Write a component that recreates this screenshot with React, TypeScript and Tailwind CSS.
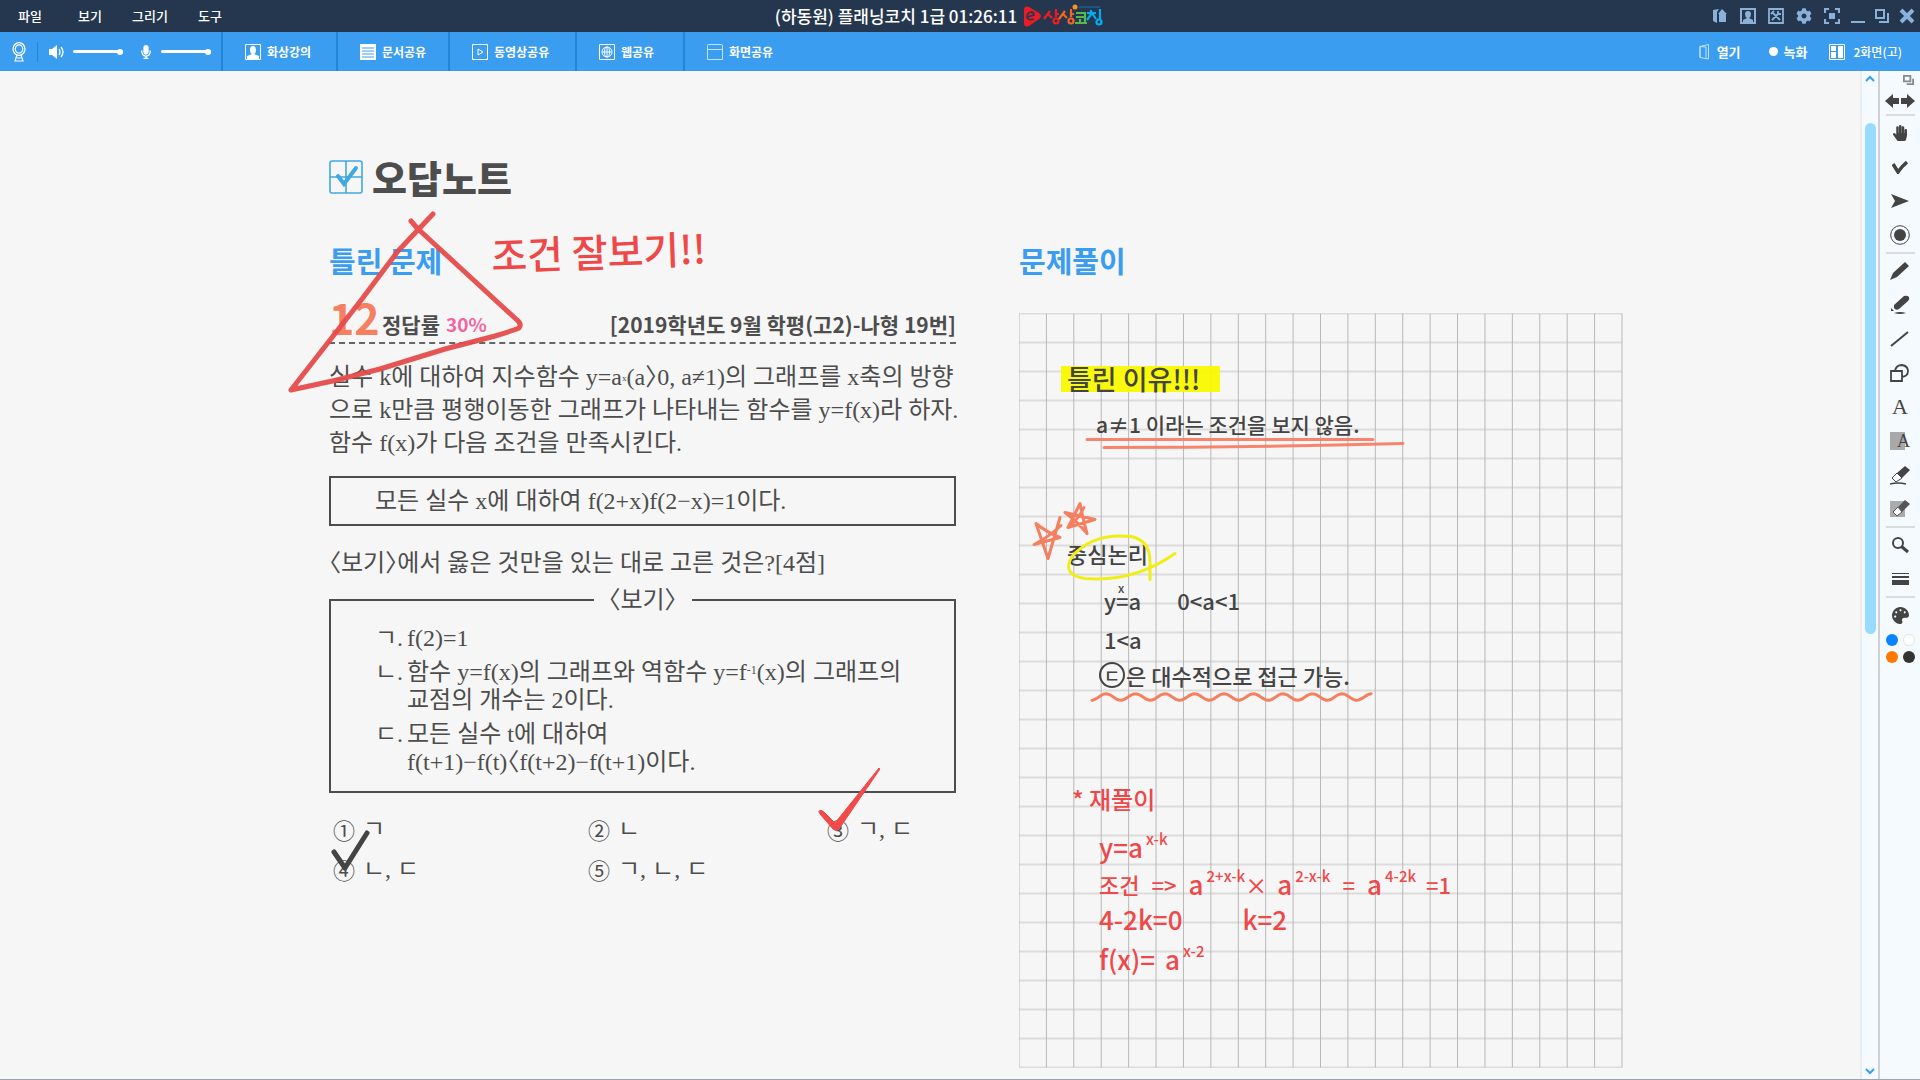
import type { ReactNode } from "react";
import { FaCog, FaHandPaper, FaMicrophone, FaPalette } from "react-icons/fa";

const SANS = "font-['Noto_Sans_CJK_KR',sans-serif]";
const SERIF = "font-['Liberation_Serif','Noto_Sans_CJK_KR',serif]";

const MENUS = ["파일", "보기", "그리기", "도구"];

function LogoMark() {
  return (
    <svg viewBox="0 0 84 24" className="h-6 w-[84px]" aria-hidden="true">
      <path d="M4 3 Q5 2 8 3 L18 9 Q22 12 18 15 L8 22 Q3 24 3 19 L3 6 Q3 4 4 3Z" fill="#ed1c24" />
      <path d="M6 13 L13 11 Q13 8 10 8 Q6 9 6 13 Q7 17 13 15" fill="none" stroke="#25374f" strokeWidth="1.8" />
      <g fill="none" strokeWidth="2.2">
        <path d="M23 15 L29 7 M27 10 L31 14 M35 5 V13 M35 10 H38" stroke="#ed1c24" />
        <circle cx="35" cy="17" r="2.5" stroke="#ed1c24" />
        <path d="M38 15 L44 7 M42 10 L46 14 M50 5 V13 M50 10 H53" stroke="#f26522" />
        <circle cx="50" cy="17" r="2.5" stroke="#f26522" />
        <path d="M55 9 H64 V18 M55 13 H63 M59 15 V19 M54 19 H66" stroke="#56b947" />
        <path d="M66 9 H75 M70 6 V9 M66 16 L71 9 L75 15 M79 5 V15" stroke="#00aeef" />
        <circle cx="78" cy="18" r="2.5" stroke="#00aeef" />
        <path d="M58 3 H79" stroke="#1b75bc" strokeWidth="1" />
      </g>
      <circle cx="54" cy="3" r="2.5" fill="#f7941e" />
    </svg>
  );
}

function WindowButton({ label, width, children }: { label: string; width: string; children: ReactNode }) {
  return (
    <button aria-label={label} className={`flex h-8 items-center justify-center text-[#8ab2d8] ${width}`}>
      {children}
    </button>
  );
}

function TitleBar() {
  return (
    <header className="flex h-8 items-center justify-between bg-[#25374f] text-white">
      <nav className="flex flex-1 text-[13px] font-medium">
        {MENUS.map((label) => (
          <button key={label} className="h-8 w-15 text-center">
            {label}
          </button>
        ))}
      </nav>
      <div className="mr-10 flex items-center gap-1">
        <h1 className="text-[17px] font-medium whitespace-nowrap">(하동원) 플래닝코치 1급 01:26:11</h1>
        <LogoMark />
      </div>
      <div className="flex flex-1 justify-end">
        <WindowButton label="책" width="w-7">
          <svg viewBox="0 0 14 16" className="h-4 w-[14px]" fill="currentColor">
            <path d="M0 2 L6 1 L4 4 V15 L0 13Z M9 1 L14 6 H13 V14 H6 V6 H5Z" />
          </svg>
        </WindowButton>
        <WindowButton label="사용자" width="w-7">
          <svg viewBox="0 0 16 16" className="size-4" fill="currentColor">
            <path d="M0 0 H16 V16 H0Z M2 2 V14 H14 V2Z" fillRule="evenodd" />
            <path d="M8 3 Q11 3 11 6 Q11 9 9 10 L13 12 V14 H3 V12 L7 10 Q5 9 5 6 Q5 3 8 3Z" />
          </svg>
        </WindowButton>
        <WindowButton label="도구 모음" width="w-7">
          <svg viewBox="0 0 16 16" className="size-4" fill="none" stroke="currentColor" strokeWidth="1.8">
            <path d="M1 1 H15 V15 H1Z M4 12 L11 5 M5 5 L12 12 M3 6 L6 3 M10 3 V6 H13" />
          </svg>
        </WindowButton>
        <WindowButton label="설정" width="w-7">
          <FaCog className="size-4" />
        </WindowButton>
        <WindowButton label="전체 화면" width="w-7">
          <svg viewBox="0 0 16 16" className="size-4" fill="none" stroke="currentColor" strokeWidth="2">
            <path d="M1 5 V1 H5 M11 1 H15 V5 M15 11 V15 H11 M5 15 H1 V11" />
            <path d="M5 5 H11 V11 H5Z" fill="currentColor" stroke="none" />
          </svg>
        </WindowButton>
        <WindowButton label="최소화" width="w-6">
          <svg viewBox="0 0 14 16" className="h-4 w-[14px]">
            <path d="M0 14 H14" stroke="currentColor" strokeWidth="2" />
          </svg>
        </WindowButton>
        <WindowButton label="이전 크기로" width="w-6">
          <svg viewBox="0 0 16 16" className="size-4" fill="none" stroke="currentColor" strokeWidth="2">
            <path d="M2 2 H10 V10 H2Z M14 5 V14 H5" />
          </svg>
        </WindowButton>
        <WindowButton label="닫기" width="w-[26px]">
          <svg viewBox="0 0 16 16" className="size-4">
            <path d="M2 2 L14 14 M14 2 L2 14" stroke="currentColor" strokeWidth="4" />
          </svg>
        </WindowButton>
      </div>
    </header>
  );
}

function VolumeSlider({ label }: { label: string }) {
  return (
    <input
      type="range"
      aria-label={label}
      defaultValue={100}
      className="h-[3px] w-[50px] appearance-none rounded-full bg-white [&::-webkit-slider-thumb]:size-[6px] [&::-webkit-slider-thumb]:appearance-none [&::-webkit-slider-thumb]:rounded-full [&::-webkit-slider-thumb]:bg-white"
    />
  );
}

function ToolbarButton({ label, width, children }: { label: string; width: string; children: ReactNode }) {
  return (
    <button className={`flex items-center gap-[6px] pl-[22px] font-bold ${width}`}>
      {children}
      {label}
    </button>
  );
}

function ShareToolbar() {
  return (
    <div className="flex h-[39px] justify-between bg-[#3b9df0] text-[12px] font-medium whitespace-nowrap text-white">
      <div className="flex">
        <div className="flex w-[223px] items-center border-r-2 border-[#2286d4] pl-3">
          <svg viewBox="0 0 14 20" className="h-5 w-[14px]" fill="none" stroke="currentColor" strokeWidth="1.2">
            <ellipse cx="7" cy="7" rx="6" ry="6.4" />
            <ellipse cx="7" cy="7" rx="3.8" ry="4.2" />
            <path d="M5 13 L3 19 H11 L9 13 M5 16 H9" />
          </svg>
          <span className="mx-[11px] h-5 w-px bg-[#2286d4]" />
          <svg viewBox="0 0 16 14" className="mr-2 h-[14px] w-4">
            <path d="M0 4 H3 L8 0 V14 L3 10 H0Z" fill="currentColor" />
            <path d="M10 4 Q12 7 10 10 M12 2 Q16 7 12 12" fill="none" stroke="currentColor" strokeWidth="1.3" />
          </svg>
          <VolumeSlider label="스피커 음량" />
          <FaMicrophone className="mr-2 ml-4 size-[14px]" />
          <VolumeSlider label="마이크 음량" />
        </div>
        <ToolbarButton label="화상강의" width="w-[115px] border-r-2 border-[#2286d4]">
          <svg viewBox="0 0 16 16" className="size-4">
            <path d="M.5 .5 H15.5 V15.5 H.5Z" fill="none" stroke="currentColor" />
            <path d="M8 2 Q11 2 11 6 Q11 9 9 10 L14 12 V15 H2 V12 L7 10 Q5 9 5 6 Q5 2 8 2Z" fill="currentColor" />
          </svg>
        </ToolbarButton>
        <ToolbarButton label="문서공유" width="w-[112px] border-r-2 border-[#2286d4]">
          <svg viewBox="0 0 16 16" className="size-4">
            <path d="M0 0 H16 V16 H0Z" fill="currentColor" />
            <path d="M2 4 H14 M2 7 H14 M2 10 H14 M2 13 H14" stroke="#3b9df0" />
          </svg>
        </ToolbarButton>
        <ToolbarButton label="동영상공유" width="w-[127px] border-r-2 border-[#2286d4]">
          <svg viewBox="0 0 16 16" className="size-4" fill="none" stroke="currentColor">
            <path d="M.5 .5 H15.5 V15.5 H.5Z M6 5 V11 L11 8Z" />
          </svg>
        </ToolbarButton>
        <ToolbarButton label="웹공유" width="w-[108px] border-r-2 border-[#2286d4]">
          <svg viewBox="0 0 16 16" className="size-4" fill="none" stroke="currentColor">
            <path d="M.5 .5 H15.5 V15.5 H.5Z M3 8 H13 M8 3 V13" />
            <circle cx="8" cy="8" r="5" />
            <ellipse cx="8" cy="8" rx="2.5" ry="5" />
          </svg>
        </ToolbarButton>
        <ToolbarButton label="화면공유" width="w-[110px]">
          <svg viewBox="0 0 16 16" className="size-4" fill="none" stroke="#c3e2fc">
            <path d="M.5 1.5 Q.5 .5 2 .5 H14 Q15.5 .5 15.5 2 V15.5 H.5Z M.5 5.5 H15.5" />
          </svg>
        </ToolbarButton>
      </div>
      <div className="flex items-center pr-[18px]">
        <button className="flex items-center gap-2 text-[13px] font-bold">
          <svg viewBox="0 0 10 16" className="h-4 w-[10px]" fill="none" stroke="#c3e2fc">
            <path d="M1 2.5 L9.5 .5 V15 L1 13.5Z M1 2.5 V13.5 M7 15 V3 L1 2.5" />
          </svg>
          열기
        </button>
        <button className="ml-7 flex items-center gap-[6px] text-[13px] font-bold">
          <span className="size-[9px] rounded-full bg-white" />
          녹화
        </button>
        <button className="ml-[22px] flex items-center gap-2 text-[12px]">
          <svg viewBox="0 0 16 16" className="size-4">
            <path d="M.5 .5 H15.5 V15.5 H.5Z" fill="none" stroke="currentColor" />
            <path d="M2 2 H7 V7 H2Z M2 8 H7 V14 H2Z M9 2 H14 V14 H9Z" fill="currentColor" />
          </svg>
          2화면(고)
        </button>
      </div>
    </div>
  );
}

function ProblemHeader() {
  return (
    <div className="flex h-[54px] items-end justify-between border-b-2 border-dashed border-[#666] pb-[6px] text-[21px] leading-6 font-bold whitespace-nowrap text-[#4d4d4d]">
      <div className="flex items-end">
        <span className="w-[53px] text-[43px] leading-10 text-[#f47f61]">12</span>
        <span>정답률</span>
        <span className="ml-[6px] text-[19px] text-[#f0679f]">30%</span>
      </div>
      <span>[2019학년도 9월 학평(고2)-나형 19번]</span>
    </div>
  );
}

function Statement({ mark, children }: { mark: string; children: ReactNode }) {
  return (
    <li className="flex leading-7">
      <span className="w-8">{mark}.</span>
      <span>{children}</span>
    </li>
  );
}

const CHOICES = [
  ["①", "ㄱ"],
  ["②", "ㄴ"],
  ["③", "ㄱ, ㄷ"],
  ["④", "ㄴ, ㄷ"],
  ["⑤", "ㄱ, ㄴ, ㄷ"],
];

function Problem() {
  return (
    <section className={`relative w-[627px] text-[24px] whitespace-nowrap text-[#4d4d4d] [font-feature-settings:'halt'] ${SERIF}`}>
      <h3 className={`text-[29px] leading-9 font-bold text-[#3b9df0] ${SANS}`}>틀린 문제</h3>
      <div className={`mt-3 ${SANS}`}>
        <ProblemHeader />
      </div>
      <p className="mt-[17px] leading-[33px]">
        실수 k에 대하여 지수함수 y=a<sup className="text-[9px]">x</sup>(a〉0, a≠1)의 그래프를 x축의 방향
        <br />
        으로 k만큼 평행이동한 그래프가 나타내는 함수를 y=f(x)라 하자.
        <br />
        함수 f(x)가 다음 조건을 만족시킨다.
      </p>
      <p className="mt-4 flex h-[50px] items-center border-2 border-[#4d4d4d] pl-11">
        모든 실수 x에 대하여 f(2+x)f(2−x)=1이다.
      </p>
      <p className="mt-[21px] leading-[33px]">〈보기〉에서 옳은 것만을 있는 대로 고른 것은?[4점]</p>
      <fieldset className="mt-1 h-[209px] border-2 border-[#4d4d4d]">
        <legend className="mx-auto w-[98px] text-center leading-[32px]">〈보기〉</legend>
        <ul className="flex flex-col gap-[6px] pt-2 pl-11">
          <Statement mark="ㄱ">f(2)=1</Statement>
          <Statement mark="ㄴ">
            함수 y=f(x)의 그래프와 역함수 y=f<sup className="text-[12px]">-1</sup>(x)의 그래프의
            <br />
            교점의 개수는 2이다.
          </Statement>
          <Statement mark="ㄷ">
            모든 실수 t에 대하여
            <br />
            f(t+1)−f(t)〈f(t+2)−f(t+1)이다.
          </Statement>
        </ul>
      </fieldset>
      <ol className="mt-4 grid grid-cols-[255px_239px_1fr] pl-1 leading-10">
        {CHOICES.map(([num, text]) => (
          <li key={num} className="flex gap-2">
            <span className="font-['Noto_Sans_CJK_KR',sans-serif] text-[22px]">{num}</span>
            {text}
          </li>
        ))}
      </ol>

      {/* pen strokes over the printed problem */}
      <svg viewBox="0 0 720 690" className="pointer-events-none absolute -top-8 -left-[49px] h-[690px] w-[720px] overflow-visible" fill="none" strokeLinecap="round" strokeLinejoin="round">
        <path d="M153 4 L118 41 L82 89 L11 180 Q56 171 100 159 L165 139 L215 126 Q232 121 239 118 Q242 114 237 110 L187 64 L137 18 L131 11" stroke="#e64b4b" strokeWidth="5" opacity=".95" />
        <path d="M539 601 Q541 599 544 602 L555 613 L599 558 L600 559 L559 619 Q556 622 553 619 L540 604Z" fill="#f04a4a" stroke="#f04a4a" />
        <path d="M54 642 L65 658 L87 623" stroke="#444" strokeWidth="5" />
      </svg>
      <p className={`absolute -top-[18px] left-[162px] -rotate-2 text-[39px] leading-[52px] font-medium text-[#ee4848] ${SANS}`}>
        조건 잘보기!!
      </p>
    </section>
  );
}

const COLS = Array.from({ length: 23 }, (_, i) => i);
const ROWS = Array.from({ length: 27 }, (_, i) => i);

// underline below the last line of the core-logic note
const WAVE = Array.from({ length: 94 }, (_, i) => {
  const x = 73 + i * 3;
  return `${x},${(383.5 - 3.3 * Math.cos(((x - 87) * 2 * Math.PI) / 29.5)).toFixed(1)}`;
}).join(" ");

function GridPaper() {
  return (
    <svg viewBox="0 0 604 754" className="absolute inset-0 size-full" aria-hidden="true">
      {ROWS.map((r) => (
        <path key={r} d={`M0 ${r * 29} H603`} stroke="#dcdcdc" strokeWidth="2" />
      ))}
      {COLS.map((c) => (
        <path key={c} d={`M${(c * 603) / 22} 0 V754`} stroke="#b8b8b8" strokeWidth="1" />
      ))}
    </svg>
  );
}

function Exp({ children }: { children: ReactNode }) {
  return <span className="mb-4 ml-[3px] text-[15px] leading-4">{children}</span>;
}

function Solution() {
  return (
    <section className="w-[604px] whitespace-nowrap">
      <h3 className="text-[29px] leading-9 font-bold text-[#3b9df0]">문제풀이</h3>
      <div className="relative mt-[35px] h-[755px] text-[22px] leading-8 font-medium text-[#444]">
        <GridPaper />
        <div className="relative">
          <p className="pt-[53px] pl-[42px]">
            <span className="flex h-[26px] w-[159px] items-center bg-[#f8f800]/95 pl-[6px] text-[27px]">틀린 이유!!!</span>
          </p>
          <p className="mt-4 pl-[77px] text-[21px]">a≠1 이라는 조건을 보지 않음.</p>
          <p className="mt-[97px] pl-12">중심논리</p>
          <p className="mt-[15px] flex gap-9 pl-[85px]">
            <span className="relative">
              y=a
              <span className="absolute -top-1 left-[14px] text-[12px] leading-4">x</span>
            </span>
            <span>0&lt;a&lt;1</span>
          </p>
          <p className="mt-[7px] pl-[85px]">1&lt;a</p>
          <p className="mt-1 flex items-center gap-px pl-20">
            <span className="flex size-[26px] items-center justify-center rounded-full border-2 border-[#444] text-[18px]">ㄷ</span>
            은 대수적으로 접근 가능.
          </p>
          <div className="text-[26px] text-[#ee4848]">
            <p className="mt-[92px] pl-[53px] text-[24px]">* 재풀이</p>
            <p className="mt-4 flex items-center pl-20">
              y=a<Exp>x-k</Exp>
            </p>
            <p className="mt-[5px] flex items-center pl-20">
              <span className="text-[22px]">조건</span>
              <span className="mx-3 text-[22px]">=&gt;</span>a<Exp>2+x-k</Exp>
              <span className="mr-[10px] text-[22px]">×</span>a<Exp>2-x-k</Exp>
              <span className="mx-3 text-[22px]">=</span>a<Exp>4-2k</Exp>
              <span className="ml-[10px] text-[22px]">=1</span>
            </p>
            <p className="mt-[3px] flex gap-15 pl-20">
              <span>4-2k=0</span>
              <span>k=2</span>
            </p>
            <p className="mt-2 flex items-center pl-20">
              f(x)=<span className="ml-[10px]">a</span>
              <Exp>x-2</Exp>
            </p>
          </div>
        </div>
        <svg viewBox="0 0 604 754" className="pointer-events-none absolute inset-0 size-full" fill="none" strokeLinecap="round" strokeLinejoin="round" aria-hidden="true">
          <path d="M68 126 H354 M85 134 Q230 134 384 130" stroke="#f8785f" strokeWidth="3" opacity=".9" />
          <g stroke="#f47f61" strokeWidth="3">
            <path d="M17 210 L29 245 L41 204 M17 210 Q28 219 41 224 L15 231 Q29 224 42 212" />
            <path d="M61 190 Q64 206 68 220 M46 199 Q60 202 76 206 L49 214 Q60 205 65 194 M49 214 L61 190 M46 199 Q58 208 68 220" />
          </g>
          <path d="M131 266 V248 Q131 227 112 223 Q74 219 53 243 Q42 261 66 265 Q115 269 156 240" stroke="#f0ee18" strokeWidth="3" />
          <polyline points={WAVE} stroke="#f47f61" strokeWidth="3" />
        </svg>
      </div>
    </section>
  );
}

function Whiteboard() {
  return (
    <main className="flex-1 overflow-hidden bg-[#f6f6f6] pt-[84px] pl-[329px]">
      <h2 className="flex items-center gap-[9px] text-[38px] leading-[44px] font-black text-[#4d4d4d]">
        <svg viewBox="0 0 34 36" className="h-9 w-[34px]" fill="none" stroke="#3fa9e0">
          <rect x="1" y="2" width="32" height="32" rx="2" strokeWidth="1.6" />
          <path d="M17 2 V34 M1 18 H33" strokeWidth="1.6" />
          <path d="M9 17 L15 25 L27 9" strokeWidth="4" strokeLinecap="round" />
        </svg>
        오답노트
      </h2>
      <div className="mt-[43px] flex gap-[63px]">
        <Problem />
        <Solution />
      </div>
    </main>
  );
}

function ScrollRail() {
  return (
    <div className="flex w-[18px] flex-col items-center justify-between border-l-2 border-[#e9ebed] bg-[#f5faff] py-1">
      <button aria-label="위로">
        <svg viewBox="0 0 10 8" className="h-2 w-[10px]" fill="none" stroke="#3b9df0" strokeWidth="2">
          <path d="M1 6 L5 2 L9 6" />
        </svg>
      </button>
      <div className="flex w-full flex-1 justify-center pt-5">
        <span className="mt-5 h-[53%] w-[11px] rounded-full bg-[#99dbff]" />
      </div>
      <button aria-label="아래로">
        <svg viewBox="0 0 10 8" className="h-2 w-[10px]" fill="none" stroke="#3b9df0" strokeWidth="2">
          <path d="M1 2 L5 6 L9 2" />
        </svg>
      </button>
    </div>
  );
}

function Tool({ label, children }: { label: string; children: ReactNode }) {
  return (
    <button aria-label={label} className="flex h-[34px] w-full items-center justify-center text-[#444]">
      {children}
    </button>
  );
}

function Rule() {
  return <hr className="h-[2px] w-[29px] border-0 bg-[#d9dbdd]" />;
}

function DrawingTools() {
  return (
    <aside className="flex w-[42px] flex-col items-center border-l-2 border-[#cdd1d5] bg-[#f5faff]">
      <button aria-label="창 분리" className="mt-[2px] mr-1 self-end p-[2px] text-[#8a8a8a]">
        <svg viewBox="0 0 12 12" className="size-[11px]" fill="none" stroke="currentColor" strokeWidth="2">
          <path d="M1 1 H8 V7 H1Z M11 4 V10 H4" />
        </svg>
      </button>
      <button aria-label="이전 다음" className="flex h-[26px] items-center justify-center text-[#444]">
        <svg viewBox="0 0 30 14" className="h-[14px] w-[30px]" fill="currentColor">
          <path d="M0 7 L8 0 V4 H14 V10 H8 V14Z M30 7 L22 0 V4 H16 V10 H22 V14Z" />
        </svg>
      </button>
      <Rule />
      <Tool label="손">
        <FaHandPaper className="size-4" />
      </Tool>
      <Tool label="체크">
        <svg viewBox="0 0 16 14" className="h-[14px] w-4" fill="none" stroke="currentColor" strokeWidth="3.5">
          <path d="M1 4 L6 12 Q10 6 15 2" />
        </svg>
      </Tool>
      <Tool label="화살표">
        <svg viewBox="0 0 18 14" className="h-[14px] w-[18px]" fill="currentColor">
          <path d="M0 0 L18 7 L0 14 L4 7Z" />
        </svg>
      </Tool>
      <Tool label="점">
        <svg viewBox="0 0 20 20" className="size-5">
          <circle cx="10" cy="10" r="9.3" fill="none" stroke="currentColor" />
          <circle cx="10" cy="10" r="6" fill="currentColor" />
        </svg>
      </Tool>
      <Rule />
      <Tool label="연필">
        <svg viewBox="0 0 20 20" className="size-5" fill="currentColor">
          <path d="M0 19 L3 12 L15 1 L19 5 L7 16Z" />
        </svg>
      </Tool>
      <Tool label="형광펜">
        <svg viewBox="0 0 20 20" className="size-5" fill="currentColor">
          <path d="M4 10 L14 1 Q17 0 19 2 Q20 4 18 6 L9 14 Q6 16 4 13Z M1 13 L4 16 L1 16Z M4 18 Q10 16 16 18 Q10 20 4 18Z" />
        </svg>
      </Tool>
      <Tool label="직선">
        <svg viewBox="0 0 20 20" className="size-5">
          <path d="M1 17 L18 3" stroke="currentColor" strokeWidth="2" />
        </svg>
      </Tool>
      <Tool label="도형">
        <svg viewBox="0 0 20 20" className="size-5" fill="none" stroke="currentColor" strokeWidth="1.8">
          <path d="M1 8 H12 V18 H1Z M5 8 Q6 2 12 2 Q18 3 18 8 Q18 13 12 14" />
        </svg>
      </Tool>
      <Tool label="텍스트">
        <span className="font-['Liberation_Serif',serif] text-[22px] leading-6">A</span>
      </Tool>
      <Tool label="텍스트 배경">
        <span className="flex h-[18px] w-5 items-center justify-end bg-linear-to-r from-[#a9a9a9] from-75% to-transparent to-75% font-['Liberation_Serif',serif] text-[18px]">A</span>
      </Tool>
      <Tool label="지우개">
        <svg viewBox="0 0 20 20" className="size-5">
          <path d="M7 8 L15 1 L20 5 L12 13Z" fill="currentColor" />
          <path d="M7 8 L2 13 L6 17 L12 13Z" fill="none" stroke="currentColor" />
          <path d="M0 19 Q8 17 16 19" fill="none" stroke="currentColor" strokeWidth="1.5" />
        </svg>
      </Tool>
      <Tool label="영역 지우개">
        <svg viewBox="0 0 20 20" className="size-5">
          <path d="M0 2 H15 V18 H0Z" fill="#ababab" />
          <path d="M8 8 L15 1 L20 5 L12 13Z" fill="#555" />
          <path d="M8 8 L3 13 L7 17 L12 13Z" fill="#fff" stroke="#555" />
        </svg>
      </Tool>
      <Rule />
      <Tool label="돋보기">
        <svg viewBox="0 0 18 18" className="size-[18px]" fill="none" stroke="currentColor">
          <circle cx="7" cy="7" r="5" strokeWidth="2" />
          <path d="M10.5 10.5 L17 16" strokeWidth="3" />
        </svg>
      </Tool>
      <Tool label="선 굵기">
        <svg viewBox="0 0 17 12" className="h-3 w-[17px]" fill="currentColor">
          <path d="M0 0 H17 V1 H0Z M0 3 H17 V5 H0Z M0 7 H17 V12 H0Z" />
        </svg>
      </Tool>
      <Rule />
      <Tool label="색상">
        <FaPalette className="size-[17px]" />
      </Tool>
      <div className="mt-[2px] grid grid-cols-2 gap-[5px]">
        <button aria-label="파랑" className="size-3 rounded-full bg-[#0a84ff]" />
        <button aria-label="흰색" className="size-3 rounded-full border border-[#e3e6e9] bg-white" />
        <button aria-label="주황" className="size-3 rounded-full bg-[#ff7800]" />
        <button aria-label="검정" className="size-3 rounded-full bg-[#333]" />
      </div>
    </aside>
  );
}

export default function App() {
  return (
    <div className={`flex min-h-screen flex-col ${SANS}`}>
      <TitleBar />
      <ShareToolbar />
      <div className="flex flex-1 border-b border-[#9aa5b0]">
        <Whiteboard />
        <ScrollRail />
        <DrawingTools />
      </div>
    </div>
  );
}
